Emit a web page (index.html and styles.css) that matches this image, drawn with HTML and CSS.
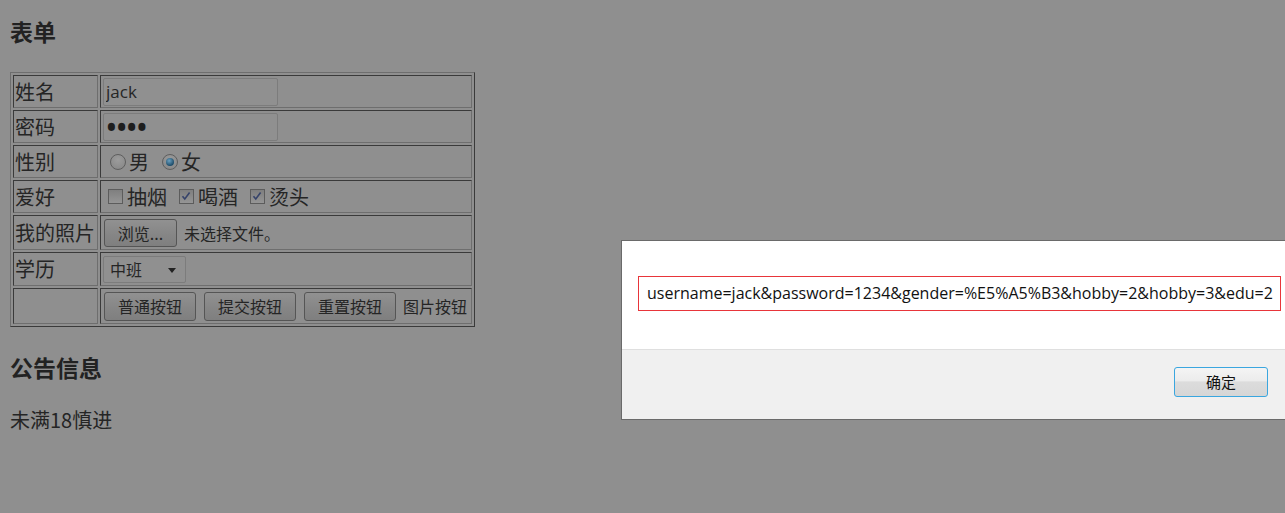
FILE: index.html
```html
<!DOCTYPE html>
<html lang="zh-CN">
<head>
<meta charset="utf-8">
<title>表单</title>
<link rel="stylesheet" href="styles.css">
</head>
<body>
<div class="page">
  <h3 class="title first">表单</h3>
  <table class="form-table">
    <colgroup><col class="c1"><col class="c2"></colgroup>
    <tr class="r33">
      <td>姓名</td>
      <td><input class="txt" type="text" value="jack"></td>
    </tr>
    <tr class="r33">
      <td>密码</td>
      <td><input class="txt pwd" type="password" value="1234"></td>
    </tr>
    <tr class="r33">
      <td>性别</td>
      <td><div class="opts radios"><span class="radio"></span><span class="lbl">男</span><span class="radio on"></span><span class="lbl">女</span></div></td>
    </tr>
    <tr class="r33">
      <td>爱好</td>
      <td><div class="opts checks"><span class="cb"></span><span class="lbl">抽烟</span><span class="cb"><svg viewBox="0 0 14 14" width="14" height="14"><path d="M3.5 7.2 L5.8 10 L10.6 3.6" fill="none" stroke="#36436a" stroke-width="1.6"/></svg></span><span class="lbl">喝酒</span><span class="cb"><svg viewBox="0 0 14 14" width="14" height="14"><path d="M3.5 7.2 L5.8 10 L10.6 3.6" fill="none" stroke="#36436a" stroke-width="1.6"/></svg></span><span class="lbl">烫头</span></div></td>
    </tr>
    <tr class="r35">
      <td>我的照片</td>
      <td><div class="opts"><span class="btn browse">浏览...</span><span class="nofile">未选择文件。</span></div></td>
    </tr>
    <tr class="r34">
      <td>学历</td>
      <td><div class="opts"><span class="select">中班<span class="arrow"></span></span></div></td>
    </tr>
    <tr class="r36">
      <td></td>
      <td><div class="opts btns"><span class="btn">普通按钮</span><span class="btn">提交按钮</span><span class="btn">重置按钮</span><span class="imgbtn">图片按钮</span></div></td>
    </tr>
  </table>
  <h3 class="title">公告信息</h3>
  <p class="notice">未满18慎进</p>
</div>

<div class="dialog">
  <div class="dialog-body">
    <div class="msg">username=jack&amp;password=1234&amp;gender=%E5%A5%B3&amp;hobby=2&amp;hobby=3&amp;edu=2</div>
  </div>
  <div class="dialog-foot">
    <span class="ok">确定</span>
  </div>
</div>
</body>
</html>
```
FILE: styles.css
```css
html, body {
  margin: 0;
  padding: 0;
  overflow: hidden;
}
body {
  background: #8f8f8f;
  width: 1285px;
  height: 513px;
  position: relative;
  font-family: "Noto Sans CJK SC", "Noto Sans", sans-serif;
  color: #252525;
}
.page {
  padding: 0 10px;
}
.title {
  font-size: 23px;
  font-weight: bold;
  line-height: 30px;
  margin: 0;
  color: #222;
}
.title.first {
  padding-top: 16px;
  margin-bottom: 26px;
}
.form-table {
  border-collapse: separate;
  border-spacing: 2px;
  border: 1px solid;
  border-color: #6e6e6e #3a3a3a #3a3a3a #6e6e6e;
  table-layout: fixed;
  width: 465px;
  font-size: 20px;
  line-height: 24px;
  margin-bottom: 25px;
}
.c1 { width: 85px; }
.c2 { width: 372px; }
.form-table td {
  box-sizing: border-box;
  border: 1px solid;
  border-color: #3a3a3a #6e6e6e #6e6e6e #3a3a3a;
  padding: 0 1px;
  vertical-align: middle;
  white-space: nowrap;
}
.r33 td { height: 33px; }
.r34 td { height: 34px; }
.r35 td { height: 35px; }
.r36 td { height: 36px; }

.txt {
  box-sizing: border-box;
  width: 175px;
  height: 28px;
  margin: 0 0 0 1px;
  padding: 0 2px;
  border: 1px solid #7c7c7c;
  border-radius: 2px;
  background: #909090;
  font-family: "Open Sans", "Noto Sans", sans-serif;
  font-size: 17px;
  color: #262626;
  display: block;
}
.pwd {
  font-size: 34px;
  line-height: 26px;
  letter-spacing: -2.6px;
  padding: 0 0 0 1px;
  color: #1e1e1e;
}
.opts {
  display: flex;
  align-items: center;
}
.radio {
  display: block;
  box-sizing: border-box;
  width: 16px;
  height: 16px;
  border-radius: 50%;
  border: 1px solid #5e5e5e;
  background: radial-gradient(circle at 50% 35%, #9c9c9c, #858585);
  position: relative;
  flex: none;
}
.radios .radio:first-child { margin-left: 8px; }
.radios .lbl { margin-left: 3px; margin-right: 13px; }
.radio.on::after {
  content: "";
  position: absolute;
  left: 3px;
  top: 3px;
  width: 8px;
  height: 8px;
  border-radius: 50%;
  background: radial-gradient(circle at 40% 35%, #6aa0c0, #1e4d6a 70%);
}
.cb {
  display: block;
  box-sizing: border-box;
  width: 15px;
  height: 15px;
  border: 1px solid #5c5c5c;
  background: linear-gradient(#7f7f7f, #959595);
  flex: none;
}
.checks .cb:first-child { margin-left: 6px; }
.cb svg { display: block; margin: -1px 0 0 -1px; }
.checks .lbl { margin-left: 4px; margin-right: 12px; }

.btn {
  display: block;
  box-sizing: border-box;
  height: 29px;
  line-height: 27px;
  border: 1px solid #555;
  border-radius: 3px;
  background: linear-gradient(#919191, #858585 60%, #7f7f7f);
  font-size: 16px;
  color: #252525;
  text-align: center;
  flex: none;
}
.btn.browse {
  width: 73px;
  height: 28px;
  line-height: 26px;
  margin-left: 2px;
}
.nofile {
  font-size: 16px;
  margin-left: 7px;
}
.select {
  display: block;
  box-sizing: border-box;
  width: 83px;
  height: 27px;
  line-height: 25px;
  margin-left: 1px;
  padding-left: 6px;
  border: 1px solid #7c7c7c;
  border-radius: 2px;
  background: #909090;
  font-size: 16px;
  position: relative;
}
.arrow {
  position: absolute;
  right: 9px;
  top: 11px;
  border-left: 4px solid transparent;
  border-right: 4px solid transparent;
  border-top: 5px solid #222;
}
.btns .btn {
  width: 92px;
  margin-right: 8px;
}
.btns .btn:first-child { margin-left: 2px; }
.imgbtn {
  font-size: 16px;
  margin-left: -1px;
}
.notice {
  margin: 24px 0 0;
  font-size: 20px;
  line-height: 28px;
}

.dialog {
  position: absolute;
  left: 621px;
  top: 240px;
  width: 676px;
  border: 1px solid #6a6a6a;
  background: #fff;
  font-family: "Open Sans", "Noto Sans CJK SC", sans-serif;
}
.dialog-body {
  height: 109px;
  padding: 35px 16px 0 16px;
  box-sizing: border-box;
  border-bottom: 1px solid #dfdfdf;
}
.msg {
  box-sizing: border-box;
  width: 643px;
  height: 35px;
  border: 1px solid #e8353a;
  padding: 0 0 0 8px;
  line-height: 33px;
  font-size: 16px;
  color: #111;
  white-space: nowrap;
  overflow: hidden;
}
.dialog-foot {
  height: 69px;
  background: #f0f0f0;
  display: flex;
  justify-content: flex-end;
  align-items: flex-start;
  padding: 17px 30px 0 0;
  box-sizing: border-box;
}
.ok {
  box-sizing: border-box;
  width: 94px;
  height: 30px;
  line-height: 28px;
  text-align: center;
  border: 1px solid #3aa6df;
  border-radius: 3px;
  background: linear-gradient(#f4f4f4 0%, #ececec 45%, #dcdcdc 50%, #d6d6d6 100%);
  font-family: "Noto Sans CJK SC", sans-serif;
  font-size: 15px;
  color: #111;
}
```
